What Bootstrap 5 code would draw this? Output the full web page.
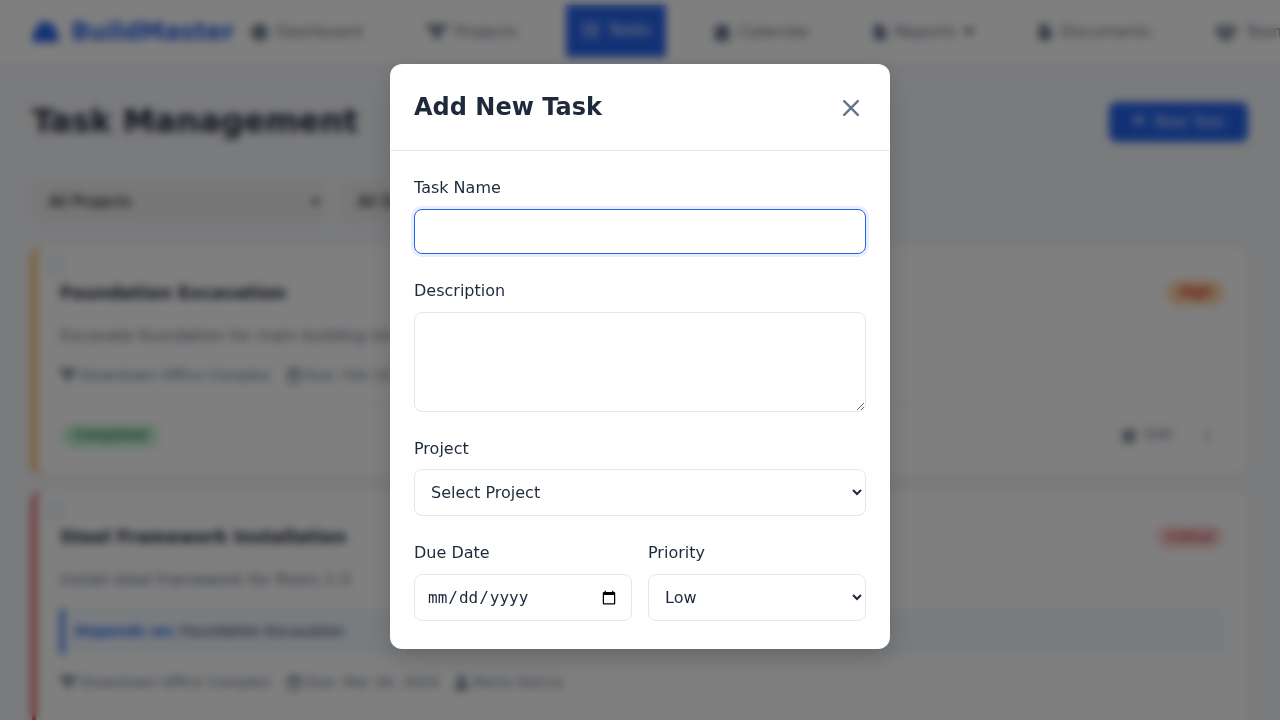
<!DOCTYPE html>
<html lang="en">
<head>
<meta charset="utf-8">
<meta name="viewport" content="width=device-width, initial-scale=1">
<title>BuildMaster - Tasks</title>
<link rel="stylesheet" href="https://cdn.jsdelivr.net/npm/bootstrap@5.3.0/dist/css/bootstrap.min.css">
<style>
:root{--ink:#1e293b;--muted:#64748b;--line:#e2e8f0;--brand:#2563eb}
html,body{height:720px;overflow:hidden}
body{font-family:"DejaVu Sans",sans-serif;color:var(--ink);background:#f5f6f9;line-height:1.6}
svg{fill:currentColor;flex:none;display:block}
.topbar{height:64px;background:#fff;box-shadow:0 1px 3px rgba(0,0,0,.1);padding:0 0 0 32px;overflow:hidden}
.brandname{font-size:24px;font-weight:700;color:var(--brand);gap:12px}
.menu{gap:32px;color:var(--muted);margin-left:1px}
.menu-item{padding:12px 16px;gap:8px;white-space:nowrap;flex:none;color:var(--muted);height:52px}
.menu-item.current{background:var(--brand);color:#fff;padding-bottom:14px;margin-top:-2px}
.menu-item.has-sub{margin-left:-1.6px}
.page{padding:32px;height:656px;overflow:hidden}
.page-title{font-size:32px;font-weight:700;line-height:51px;margin:0}
.page-head{margin-bottom:34px}
.btn-new{width:139px;height:40px;background:var(--brand);color:#fff;border-radius:8px;font-size:15px;padding:2px 0 0;gap:10px}
.btn-new span{opacity:.8}
.btn-new svg{margin-top:-3px}
.filter{width:293px;height:42px;background:#efefef;border:1px solid #e9ecf0;border-radius:8px;font-size:15px;color:#000;padding:0 4px 0 16px}
.task{background:#fff;border-radius:12px;border-left:4px solid #f59e0b;padding:24px;position:relative;box-shadow:0 1px 3px rgba(0,0,0,.1);height:228px}
.task.critical{border-left-color:#dc2626;height:272px}
.handle{position:absolute;left:8px;top:8px;width:22px;height:22px;background:#f1f5f9;border-radius:4px}
.task-name{font-size:17.6px;font-weight:700;line-height:28px;margin:0}
.pill{border-radius:20px;font-size:12px;font-weight:600;height:24px;padding:0 12px}
.pill-high{background:#fed7aa;color:#dc2626;padding:0 13px;height:26px}
.pill-critical{background:#fed6d6;color:#c24a4a;font-size:11.5px;padding:0 11px}
.pill-done{background:#c8f5d6;color:#3d8058;margin-left:2px;margin-top:1px}
.desc{color:var(--muted);line-height:26px;margin:16px 0 15px}
.meta{font-size:14.4px;color:var(--muted);line-height:22px;gap:16px}
.task-foot{border-top:1px solid var(--line);margin-top:16px;padding-top:17px}
.depends{background:#f0f9ff;border-left:4px solid var(--brand);border-radius:4px;height:47px;font-size:14.4px;margin-bottom:16px;padding:0 11px}
.depends strong{color:var(--brand)}
.btn-mini{border:1px solid #f1f5f9;border-radius:6px;color:var(--muted);font-size:14.4px;height:30px;padding:0 8px;gap:8px}
.btn-dots{width:34px;padding:0}
.overlay{display:block;background:rgba(0,0,0,.5);backdrop-filter:blur(4px);overflow:hidden}
.overlay .modal-dialog{margin:64px auto 0;width:500px;max-width:500px}
.overlay .modal-content{border:0;border-radius:12px;height:585px;box-shadow:0 10px 25px rgba(0,0,0,.17);color:var(--ink)}
.overlay .modal-header{height:87px;padding:2px 24px 0;border-color:var(--line)}
.overlay .modal-title{font-size:24px;font-weight:700;line-height:38px;margin-top:-2px}
.shut{color:var(--muted);width:30px;height:30px;background:none;border:0;padding:0}
.overlay .modal-body{padding:24px}
.field label{display:block;line-height:26px;font-weight:500;margin-bottom:8px}
.field label.snug{margin-bottom:7px}
.field .form-control{border:1px solid var(--line);border-radius:8px;padding:12px;color:var(--ink);font-size:16px;line-height:normal;height:47px;background:#fff}
.field select.form-control{appearance:auto;font-family:inherit}
.field input[type=date]{font-family:"DejaVu Sans Mono",monospace}
.field input::-webkit-datetime-edit{padding:0;height:auto}
.field input::-webkit-datetime-edit-month-field,
.field input::-webkit-datetime-edit-day-field,
.field input::-webkit-datetime-edit-year-field{padding:0 1px}
.field .form-control.active-input{height:45px;border-color:var(--brand);box-shadow:0 0 0 3px rgba(37,99,235,.1)}
.field textarea.form-control{height:100px;min-height:0;resize:vertical}
</style>
</head>
<body>
<nav class="topbar d-flex align-items-center">
  <div class="brandname d-flex align-items-center flex-shrink-0">
    <svg width="27" height="24" viewBox="0 0 27 24"><path d="M2 15C2 8 6 4 10 3q1-2 3.500-2T17 3c4 1 8 5 8 12l2 2v2q0 3-3 3H3q-3 0-3-3v-2z"/></svg>
    <span>BuildMaster</span>
  </div>
  <div class="menu d-flex align-items-center flex-shrink-0">
    <div class="menu-item d-flex align-items-center"><svg width="17" height="17" viewBox="0 0 16 16"><path fill-rule="evenodd" d="M8 0a8 8 0 1 0 0 16A8 8 0 0 0 8 0zm3 4-2 5a1.500 1.500 0 1 1-1-1z"/></svg>Dashboard</div>
    <div class="menu-item d-flex align-items-center"><svg width="20" height="16" viewBox="0 0 20 16"><path d="M0 0h6v1.500h8V0h6v6h-5l-2 3v6H7V9L5 6H0z"/></svg>Projects</div>
    <div class="menu-item current d-flex align-items-center"><svg width="17.600" height="16" viewBox="0 0 16 16"><path d="M0 1h3v3H0zm5 .500h11v2H5zM0 6.500h3v3H0zm5 .500h11v2H5zM0 12h3v3H0zm5 .500h11v2H5z"/></svg>Tasks</div>
    <div class="menu-item d-flex align-items-center"><svg width="16" height="17" viewBox="0 0 16 17"><path d="M1 2h3V0h2v2h4V0h2v2h3v15H1z"/></svg>Calendar</div>
    <div class="menu-item has-sub d-flex align-items-center"><svg width="14" height="16" viewBox="0 0 14 16"><path d="M1 0h7v5h5v11H1zm8 0 4 4H9z"/></svg>Reports<svg width="10" height="8" viewBox="0 0 10 8"><path d="M0 0h10v2L5 8 0 2z"/></svg></div>
    <div class="menu-item d-flex align-items-center"><svg width="14" height="16" viewBox="0 0 14 16"><path d="M1 0h7v5h5v11H1zm8 0 4 4H9z"/></svg>Documents</div>
    <div class="menu-item d-flex align-items-center"><svg width="22" height="16" viewBox="0 0 22 16"><circle cx="4" cy="3" r="2.500"/><circle cx="18" cy="3" r="2.500"/><circle cx="11" cy="5" r="3.500"/><path d="M0 6h7v4H0zm15 0h7v4h-7zM5 16q0-6 4-6h4q4 0 4 6z"/></svg>Team</div>
  </div>
</nav>
<main class="page">
  <div class="page-head d-flex justify-content-between align-items-center">
    <h1 class="page-title">Task Management</h1>
    <button class="btn btn-new d-flex align-items-center justify-content-center"><svg width="12" height="16" viewBox="0 0 12 16"><path d="M5 1h2v5h5v2H7v5H5V8H0V6h5z"/></svg><span>New Task</span></button>
  </div>
  <div class="d-flex gap-3 mb-4">
    <div class="filter d-flex align-items-center justify-content-between">All Projects<svg width="9" height="6" viewBox="0 0 9 6"><path d="M0 1h9L4.500 6z"/></svg></div>
    <div class="filter d-flex align-items-center justify-content-between">All Status<svg width="9" height="6" viewBox="0 0 9 6"><path d="M0 1h9L4.500 6z"/></svg></div>
  </div>
  <article class="task mb-3">
    <span class="handle"></span>
    <div class="d-flex justify-content-between align-items-center pt-2">
      <h2 class="task-name">Foundation Excavation</h2>
      <span class="pill pill-high d-flex align-items-center">High</span>
    </div>
    <p class="desc">Excavate foundation for main building structure</p>
    <div class="meta d-flex">
      <span class="d-flex align-items-center gap-1"><svg width="16.500" height="14" viewBox="0 0 20 16"><path d="M0 0h6v1.500h8V0h6v6h-5l-2 3v6H7V9L5 6H0z"/></svg>Downtown Office Complex</span>
      <span class="d-flex align-items-center gap-1"><svg width="14" height="15" viewBox="0 0 14 15"><path fill-rule="evenodd" d="M1 2h2V0h2v2h4V0h2v2h2v13H1zm2 4v7h8V6z"/></svg>Due: Feb 15, 2024</span>
    </div>
    <div class="task-foot d-flex justify-content-between align-items-center">
      <span class="pill pill-done d-flex align-items-center">Completed</span>
      <div class="d-flex gap-2">
        <span class="btn-mini d-flex align-items-center"><svg width="14" height="14" viewBox="0 0 14 14"><path d="M0 2h8L4 7v3h3l5-5v9H0zm12-2 2 2-7 7H5V7z"/></svg>Edit</span>
        <span class="btn-mini btn-dots d-flex align-items-center justify-content-center"><svg width="3" height="12" viewBox="0 0 3 14"><path d="M0 1h3v3H0zm0 5h3v3H0zm0 5h3v3H0z"/></svg></span>
      </div>
    </div>
  </article>
  <article class="task critical">
    <span class="handle"></span>
    <div class="d-flex justify-content-between align-items-center pt-2">
      <h2 class="task-name">Steel Framework Installation</h2>
      <span class="pill pill-critical d-flex align-items-center">Critical</span>
    </div>
    <p class="desc">Install steel framework for floors 1-5</p>
    <div class="depends d-flex align-items-center gap-1"><strong>Depends on:</strong><span>Foundation Excavation</span></div>
    <div class="meta d-flex">
      <span class="d-flex align-items-center gap-1"><svg width="16.500" height="14" viewBox="0 0 20 16"><path d="M0 0h6v1.500h8V0h6v6h-5l-2 3v6H7V9L5 6H0z"/></svg>Downtown Office Complex</span>
      <span class="d-flex align-items-center gap-1"><svg width="14" height="15" viewBox="0 0 14 15"><path fill-rule="evenodd" d="M1 2h2V0h2v2h4V0h2v2h2v13H1zm2 4v7h8V6z"/></svg>Due: Mar 30, 2024</span>
      <span class="d-flex align-items-center gap-1"><svg width="13" height="15" viewBox="0 0 13 15"><circle cx="6.500" cy="3.500" r="3.500"/><path d="M0 15q0-7 4-7h5q4 0 4 7z"/></svg>Maria Garcia</span>
    </div>
    <div class="task-foot"></div>
  </article>
</main>
<div class="modal overlay" role="dialog" aria-modal="true">
  <div class="modal-dialog">
    <div class="modal-content">
      <div class="modal-header">
        <h2 class="modal-title">Add New Task</h2>
        <button class="shut d-flex align-items-center justify-content-center" aria-label="Close"><svg width="16" height="16" viewBox="0 0 16 16"><path d="m1.200 1.200 13.600 13.600M14.800 1.200 1.200 14.800" fill="none" stroke="currentColor" stroke-width="2.400" stroke-linecap="round"/></svg></button>
      </div>
      <form class="modal-body d-flex flex-column gap-4">
        <div class="field"><label for="name">Task Name</label><input id="name" class="form-control active-input" type="text"></div>
        <div class="field"><label for="about">Description</label><textarea id="about" class="form-control"></textarea></div>
        <div class="field"><label class="snug" for="proj">Project</label><select id="proj" class="form-control"><option>Select Project</option></select></div>
        <div class="row gx-3">
          <div class="field col-6"><label for="due">Due Date</label><input id="due" class="form-control" type="date"></div>
          <div class="field col-6"><label for="prio">Priority</label><select id="prio" class="form-control"><option>Low</option></select></div>
        </div>
      </form>
    </div>
  </div>
</div>
<script src="https://cdn.jsdelivr.net/npm/bootstrap@5.3.0/dist/js/bootstrap.bundle.min.js"></script>
</body>
</html>
